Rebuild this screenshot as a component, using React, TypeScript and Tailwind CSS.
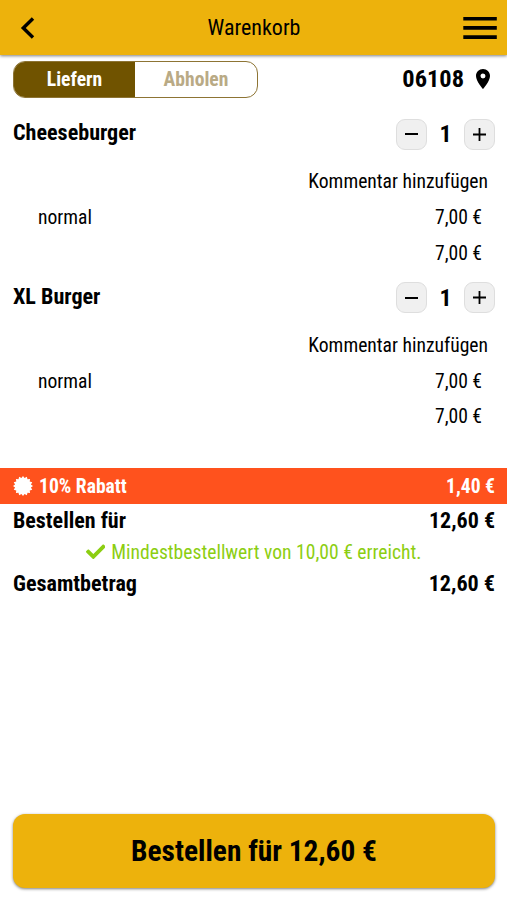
import { FaCheck } from 'react-icons/fa'
import { MdPlace } from 'react-icons/md'

const items = [
    { name: 'Cheeseburger', variant: 'normal', price: '7,00 €' },
    { name: 'XL Burger', variant: 'normal', price: '7,00 €' },
]

// 16-pointed seal, radii alternate between tip and notch
const seal = Array.from({ length: 32 }, (_, i) => {
    const r = i % 2 ? 8.1 : 10
    const a = (i * Math.PI) / 16
    return `${(r * Math.sin(a)).toFixed(2)},${(-r * Math.cos(a)).toFixed(2)}`
}).join(' ')

function CartItem({ name, variant, price }: { name: string; variant: string; price: string }) {
    return (
        <section className="h-[163.5px] pl-[13px] pr-3">
            <div className="flex h-[36px] items-center justify-between">
                <h2 className="-mt-[3px] text-[22.1px] font-bold">{name}</h2>
                <div className="flex items-center">
                    <button type="button" aria-label="Weniger" className="flex size-[31px] items-center justify-center rounded-[9px] border border-[#dedede] bg-[#f0f0f0]">
                        <span className="h-[2px] w-[13px] bg-black" />
                    </button>
                    <span className="w-[37px] text-center text-[24px] font-bold">1</span>
                    <button type="button" aria-label="Mehr" className="flex size-[31px] items-center justify-center rounded-[9px] border border-[#dedede] bg-[#f0f0f0]">
                        <svg className="size-[13px]" viewBox="0 0 13 13" stroke="black" strokeWidth="1.8">
                            <path d="M0 6.5h13M6.5 0v13" />
                        </svg>
                    </button>
                </div>
            </div>
            <div className="mt-[11px] flex h-[36px] items-center justify-end pr-[7px] pt-[2px] text-[19.6px]">Kommentar hinzufügen</div>
            <div className="flex h-[36px] items-center justify-between pl-[25px] pr-[13px] pt-[2px] text-[19.6px]">
                <span>{variant}</span>
                <span>{price}</span>
            </div>
            <div className="flex h-[36px] items-center justify-end pr-[13px] pt-px text-[19.6px]">{price}</div>
        </section>
    )
}

export default function App() {
    return (
        <div className="flex h-[900px] w-[507px] flex-col overflow-hidden bg-white font-['Roboto_Condensed',Roboto,sans-serif] leading-none text-black [font-stretch:75%]">
            <header className="flex h-[55px] shrink-0 items-center justify-between bg-[#edb20c] pl-[20px] pr-[10px] shadow-[0_1px_3px_rgba(0,0,0,0.5)]">
                <svg className="h-[22px] w-[25px]" viewBox="0 0 25 22" fill="none" stroke="black" strokeWidth="3.4">
                    <path d="M13 1.5 3.3 11 13 20.5" />
                </svg>
                <h1 className="text-[22px]">Warenkorb</h1>
                <svg className="h-[23px] w-[34px]" viewBox="0 0 34 23" stroke="black" strokeWidth="3.6">
                    <path d="M0.3 2.7h33.5M0.3 11.9h33.5M0.3 21.1h33.5" />
                </svg>
            </header>

            <div className="flex h-[61px] shrink-0 items-start justify-between pl-[13px] pr-[12px] pt-[5.5px]">
                <div className="flex h-[37px] w-[245px] overflow-hidden rounded-[12px] border border-[#8d7434] text-[19.6px] font-bold">
                    <button type="button" className="flex w-[121px] items-center justify-center bg-[#705300] pt-[2px] text-white">Liefern</button>
                    <button type="button" className="flex flex-1 items-center justify-center pt-[2px] text-[#b9aa85]">Abholen</button>
                </div>
                <div className="flex h-[37px] items-center text-[24.4px] font-bold">
                    06108
                    <MdPlace className="-mt-px ml-[7px] size-[24px]" />
                </div>
            </div>

            {items.map((item) => (
                <CartItem key={item.name} {...item} />
            ))}

            <div className="mt-[25px] flex h-[36px] shrink-0 items-center justify-between bg-[#ff521d] pl-[13px] pr-3 text-[19.6px] font-bold text-white">
                <span className="flex items-center">
                    <svg className="mr-[6px] size-[20px]" viewBox="-10 -10 20 20" fill="currentColor">
                        <polygon points={seal} />
                    </svg>
                    <span className="pt-[2px]">10% Rabatt</span>
                </span>
                <span className="pt-[2px]">1,40 €</span>
            </div>
            <div className="flex h-[34px] shrink-0 items-center justify-between pl-[13px] pr-3 text-[22px] font-bold">
                <span>Bestellen für</span>
                <span>12,60 €</span>
            </div>
            <div className="flex h-[28px] shrink-0 items-center justify-center text-[19.6px] text-[#8cce12]">
                <FaCheck className="mr-[6px] size-[19.6px]" />
                <span className="pt-[2px]">Mindestbestellwert von 10,00 € erreicht.</span>
            </div>
            <div className="flex h-[34px] shrink-0 items-center justify-between pl-[13px] pr-3 text-[22.1px] font-bold">
                <span>Gesamtbetrag</span>
                <span>12,60 €</span>
            </div>

            <button type="button" className="mb-3 ml-[13px] mr-3 mt-auto h-[74px] shrink-0 rounded-[12px] bg-[#edb20c] pt-[2px] text-[29.4px] font-bold shadow-[0_1px_3px_rgba(0,0,0,0.5)]">
                Bestellen für 12,60 €
            </button>
        </div>
    )
}
